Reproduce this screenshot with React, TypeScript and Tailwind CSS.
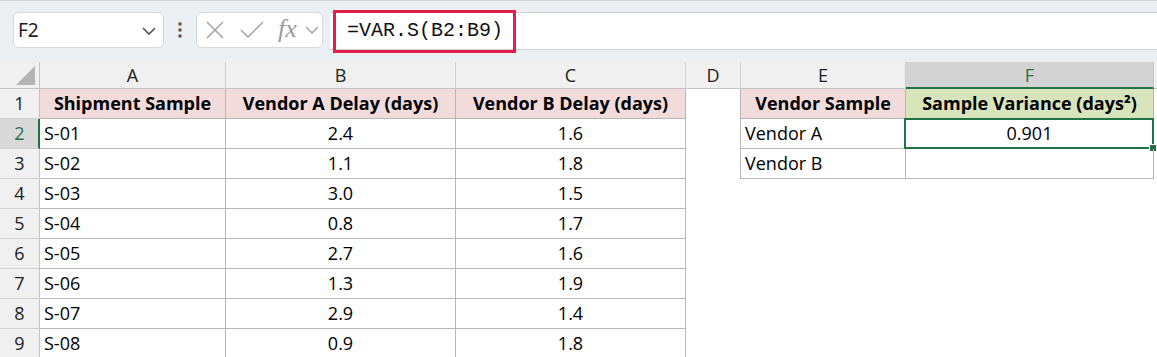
import React from "react";

const B = "border-[#b7b7b7]";

type Row = { a: string; b: string; c: string };
const rows: Row[] = [
  { a: "S-01", b: "2.4", c: "1.6" },
  { a: "S-02", b: "1.1", c: "1.8" },
  { a: "S-03", b: "3.0", c: "1.5" },
  { a: "S-04", b: "0.8", c: "1.7" },
  { a: "S-05", b: "2.7", c: "1.6" },
  { a: "S-06", b: "1.3", c: "1.9" },
  { a: "S-07", b: "2.9", c: "1.4" },
  { a: "S-08", b: "0.9", c: "1.8" },
];

function ColHead({ label, active }: { label: string; active?: boolean }) {
  return (
    <div
      className={
        active
          ? "flex items-center justify-center bg-[#d3d3d3] text-[#217346] border-r border-r-[#c4c4c4] border-b-2 border-b-[#217346] pt-[1px]"
          : "flex items-center justify-center bg-[#f0f0f0] text-[#222] border-r border-r-[#d0d0d0] border-b border-b-[#c4c4c4]"
      }
    >
      {label}
    </div>
  );
}

function RowHead({ n, active }: { n: number; active?: boolean }) {
  return (
    <div
      className={
        active
          ? "flex items-center justify-center bg-[#d9d9d9] text-[#217346] border-b border-b-[#d0d0d0] border-r-2 border-r-[#217346] pl-[1px]"
          : "flex items-center justify-center bg-[#f0f0f0] text-[#222] border-b border-b-[#d0d0d0] border-r border-r-[#c4c4c4]"
      }
    >
      {n}
    </div>
  );
}

export default function App() {
  return (
    <div className="w-[1157px] h-[357px] overflow-hidden bg-white" style={{ fontFamily: "'Open Sans', 'Noto Sans', sans-serif" }}>
      {/* Toolbar */}
      <div className="h-[62px] bg-[#eceff2] border-t border-t-[#d3d6d9] flex items-start pt-[11px]">
        <div className="ml-[13px] w-[151px] h-[36px] bg-white border border-[#d6d9dc] rounded-[6px] flex items-center pl-[4px] pr-[6px] justify-between">
          <span className="text-[19px] text-[#1f1f1f]" style={{ fontFamily: "'Noto Sans', sans-serif" }}>F2</span>
          <svg width="16" height="10" viewBox="0 0 16 10" className="mt-[2px]">
            <path d="M2 2 L8 8 L14 2" fill="none" stroke="#555" strokeWidth="1.6" />
          </svg>
        </div>
        <div className="w-[32px] h-[36px] flex items-center justify-center">
          <svg width="4" height="16" viewBox="0 0 4 16">
            <rect x="0.5" y="0.5" width="3" height="3" fill="#6a4a35" />
            <rect x="0.5" y="6.5" width="3" height="3" fill="#6a4a35" />
            <rect x="0.5" y="12.5" width="3" height="3" fill="#6a4a35" />
          </svg>
        </div>
        <div className="w-[127px] h-[36px] bg-white border border-[#d6d9dc] rounded-[6px] flex items-center pl-[8px]">
          <svg width="20" height="20" viewBox="0 0 20 20">
            <path d="M2 2 L18 18 M18 2 L2 18" stroke="#a3a3a3" strokeWidth="1.5" fill="none" />
          </svg>
          <svg width="26" height="20" viewBox="0 0 26 20" className="ml-[14px]">
            <path d="M2 10 L9 17 L24 2" stroke="#a3a3a3" strokeWidth="1.5" fill="none" />
          </svg>
          <span
            className="ml-[13px] text-[26px] italic text-[#9a9a9a] leading-none mb-[3px]"
            style={{ fontFamily: "'Liberation Serif', serif" }}
          >
            fx
          </span>
          <svg width="16" height="10" viewBox="0 0 16 10" className="ml-[7px]">
            <path d="M2 2 L8 8 L14 2" fill="none" stroke="#a3a3a3" strokeWidth="1.5" />
          </svg>
        </div>
        <div className="ml-[7px] flex-1 h-[38px] bg-white border-y border-[#cfd2d5] flex items-center">
          <div
            className="ml-[3px] -my-[3px] h-[43px] border-[3px] border-[#e0204a] flex items-center pl-[11px] pr-[10px] text-[20px] text-[#111]"
            style={{ fontFamily: "'Liberation Mono', monospace" }}
          >
            =VAR.S(B2:B9)
          </div>
        </div>
      </div>

      {/* Grid */}
      <div className="grid grid-cols-[40px_186px_230px_230px_55px_165px_248px_1fr] grid-rows-[27px_repeat(9,30px)] text-[18px] text-black">
        <div className="relative bg-[#f0f0f0] border-r border-r-[#c4c4c4] border-b border-b-[#c4c4c4]">
          <svg width="40" height="27" viewBox="0 0 40 27" className="absolute inset-0">
            <polygon points="35,4 35,23 16,23" fill="#b4b4b4" />
          </svg>
        </div>
        <ColHead label="A" />
        <ColHead label="B" />
        <ColHead label="C" />
        <ColHead label="D" />
        <ColHead label="E" />
        <ColHead label="F" active />
        <div className="bg-[#f0f0f0] border-b border-b-[#c4c4c4]" />

        <RowHead n={1} />
        <div className={`flex items-center justify-center font-bold bg-[#f2dcdb] border-r border-b ${B}`}>Shipment Sample</div>
        <div className={`flex items-center justify-center font-bold bg-[#f2dcdb] border-r border-b ${B}`}>Vendor A Delay (days)</div>
        <div className={`flex items-center justify-center font-bold bg-[#f2dcdb] border-r border-b ${B}`}>Vendor B Delay (days)</div>
        <div className={`border-r ${B}`} />
        <div className={`flex items-center justify-center font-bold bg-[#f2dcdb] border-r border-b ${B}`}>Vendor Sample</div>
        <div className={`flex items-center justify-center font-bold bg-[#d8e4bc] border-r border-b ${B}`}>
          Sample Variance (days²)
        </div>
        <div />

        {rows.map((r, i) => {
          const n = i + 2;
          const inSide = n <= 3;
          return (
            <React.Fragment key={n}>
              <RowHead n={n} active={n === 2} />
              <div className={`flex items-center pl-[4px] border-r border-b ${B}`}>{r.a}</div>
              <div className={`flex items-center justify-center border-r border-b ${B}`}>{r.b}</div>
              <div className={`flex items-center justify-center border-r border-b ${B}`}>{r.c}</div>
              <div className={inSide ? `border-r ${B}` : ""} />
              <div className={inSide ? `flex items-center pl-[4px] border-r border-b ${B}` : ""}>
                {n === 2 ? "Vendor A" : n === 3 ? "Vendor B" : ""}
              </div>
              <div className={inSide ? `relative flex items-center justify-center border-r border-b ${B}` : ""}>
                {n === 2 && (
                  <>
                    0.901
                    <div className="absolute -left-[2px] -top-[1px] -right-[1px] -bottom-[1px] border-2 border-[#217346]" />
                    <div className="absolute -right-[4px] -bottom-[4px] w-[8px] h-[8px] bg-[#217346] border border-white" />
                  </>
                )}
              </div>
              <div />
            </React.Fragment>
          );
        })}
      </div>
    </div>
  );
}
